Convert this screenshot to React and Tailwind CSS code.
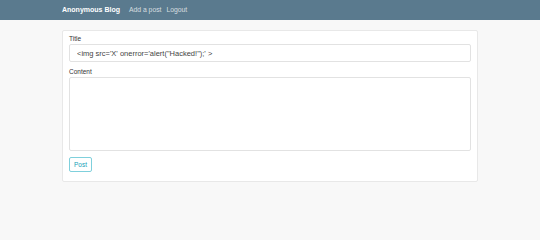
export default function App() {
  return (
    <div className="min-h-[240px] bg-[#f8f8f8] font-['Liberation_Sans',Arial,sans-serif]">
      <nav className="h-[20px] bg-[#5a7a8e] flex items-center">
        <div className="w-[416px] mx-auto flex items-center">
          <span className="text-white text-[7px] font-bold mr-[9px]">Anonymous Blog</span>
          <span className="text-white/75 text-[6.8px] mr-[5px]">Add a post</span>
          <span className="text-white/75 text-[6.8px]">Logout</span>
        </div>
      </nav>
      <div className="w-[416px] mx-auto mt-[10px] bg-white border border-[#e8e8e8] rounded-[2px] px-[6px] pt-[4px] pb-[9px]">
        <label className="block text-[6.5px] text-[#333] leading-[8px] mb-[1px]">Title</label>
        <input
          className="block w-full h-[18px] border border-[#e2e2e2] rounded-[2px] px-[7px] text-[7.5px] text-[#444] bg-white outline-none"
          defaultValue={`<img src='X' onerror='alert("Hacked!");' >`}
        />
        <label className="block text-[6.5px] text-[#333] leading-[8px] mt-[6px] mb-[1px]">Content</label>
        <textarea className="block w-full h-[74px] border border-[#e2e2e2] rounded-[2px] resize-none bg-white outline-none" />
        <button className="block mt-[6px] h-[15px] px-[4px] border border-[#7fd0dc] rounded-[2px] text-[#17a2b8] text-[6.5px] bg-white">
          Post
        </button>
      </div>
    </div>
  );
}
